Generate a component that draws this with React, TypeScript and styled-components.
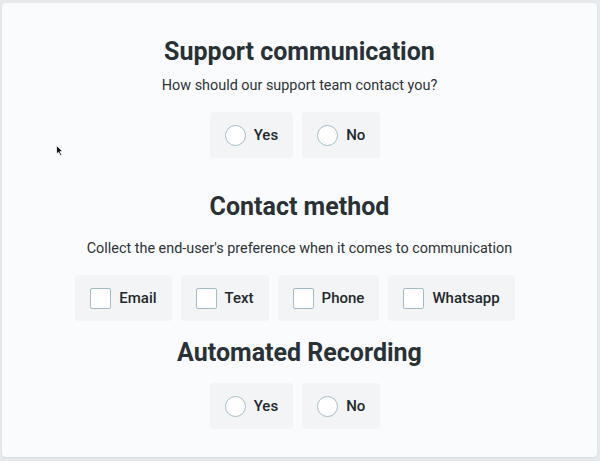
import React from 'react'
import styled, { createGlobalStyle } from 'styled-components'

const GlobalStyle = createGlobalStyle`
  html, body {
    margin: 0;
    padding: 0;
    background: #e7eaed;
  }
  body {
    font-family: Roboto, 'Noto Sans', sans-serif;
    color: #283236;
  }
`

const contactMethods = ['Email', 'Text', 'Phone', 'Whatsapp']

export default function App() {
  return (
    <Page>
      <GlobalStyle />
      <Card>
        <Section $top={33}>
          <Title>Support communication</Title>
          <Subtitle $gap={8}>How should our support team contact you?</Subtitle>
          <OptionRow $gap={16}>
            <Option>
              <Radio />
              <Label>Yes</Label>
            </Option>
            <Option>
              <Radio />
              <Label>No</Label>
            </Option>
          </OptionRow>
        </Section>

        <Section $top={33}>
          <Title>Contact method</Title>
          <Subtitle $gap={16}>
            Collect the end-user's preference when it comes to communication
          </Subtitle>
          <OptionRow $gap={16}>
            {contactMethods.map((m) => (
              <Option key={m}>
                <Checkbox />
                <Label>{m}</Label>
              </Option>
            ))}
          </OptionRow>
        </Section>

        <Section $top={16}>
          <Title>Automated Recording</Title>
          <OptionRow $gap={14}>
            <Option>
              <Radio />
              <Label>Yes</Label>
            </Option>
            <Option>
              <Radio />
              <Label>No</Label>
            </Option>
          </OptionRow>
        </Section>

        <Cursor width="8" height="11" viewBox="0 0 8 11">
          <path d="M0.5 0.5 L0.5 9 L2.6 7.2 L4.2 10.5 L5.6 9.8 L4 6.6 L6.8 6.6 Z" fill="#111" stroke="#fff" strokeWidth="0.8" />
        </Cursor>
      </Card>
    </Page>
  )
}

const Page = styled.div`
  width: 600px;
  height: 461px;
  padding: 3px 3px 4px 2px;
  box-sizing: border-box;
`

const Card = styled.div`
  position: relative;
  height: 100%;
  background: #fafbfc;
  border-radius: 4px;
  box-shadow: 0 1px 2px rgba(40, 50, 60, 0.08);
  display: flex;
  flex-direction: column;
  align-items: center;
`

const Section = styled.section<{ $top: number }>`
  display: flex;
  flex-direction: column;
  align-items: center;
  margin-top: ${(p) => p.$top}px;
`

const Title = styled.h2`
  margin: 0;
  font-size: 25px;
  line-height: 32px;
  font-weight: 700;
  color: #283236;
`

const Subtitle = styled.p<{ $gap: number }>`
  margin: ${(p) => p.$gap}px 0 0;
  font-size: 14.4px;
  line-height: 20px;
  color: #2b3437;
`

const OptionRow = styled.div<{ $gap: number }>`
  display: flex;
  margin-top: ${(p) => p.$gap}px;
`

const Option = styled.label`
  display: flex;
  align-items: center;
  gap: 8px;
  height: 46px;
  padding: 0 15px;
  margin-right: 9px;
  background: #f2f4f6;
  border-radius: 4px;
  box-sizing: border-box;
`

const Radio = styled.span`
  width: 21px;
  height: 21px;
  box-sizing: border-box;
  border: 1.5px solid #a3bcc6;
  border-radius: 50%;
  background: #fff;
`

const Checkbox = styled.span`
  width: 21px;
  height: 21px;
  box-sizing: border-box;
  border: 1.5px solid #a3bcc6;
  border-radius: 2px;
  background: #fff;
`

const Label = styled.span`
  font-size: 15px;
  font-weight: 500;
  color: #22292c;
`

const Cursor = styled.svg`
  position: absolute;
  left: 54px;
  top: 142px;
`
